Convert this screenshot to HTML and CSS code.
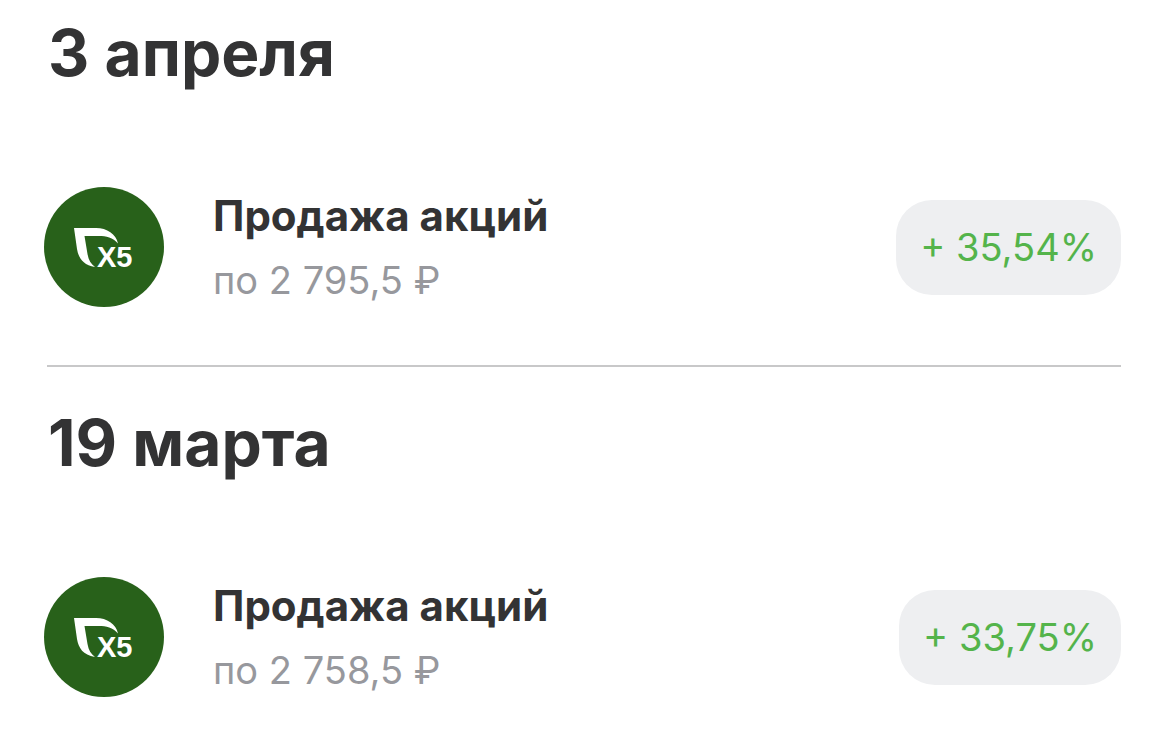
FILE: index.html
```html
<!DOCTYPE html>
<html lang="ru">
<head>
<meta charset="utf-8">
<meta name="viewport" content="width=device-width, initial-scale=1">
<title>Операции</title>
<link rel="stylesheet" href="styles.css">
</head>
<body>
<main class="history">
  <section class="day">
    <h2 class="day-title">3 апреля</h2>
    <article class="deal">
      <svg class="logo" viewBox="0 0 120 120" role="img" aria-label="X5">
        <circle cx="60" cy="60" r="60" fill="#28611a"/>
        <path d="M30 41H52C63 41 72 47 74 56.500C69 50.500 62 49 55 49H40.500L43.500 67C44.500 73 47 77 51 80C39 78 34.500 71 33 62Z" fill="#fff"/>
        <text class="logo-text" x="53" y="80">X5</text>
      </svg>
      <div class="deal-info">
        <h3 class="deal-title">Продажа акций</h3>
        <p class="deal-price">по 2 795,5 ₽</p>
      </div>
      <span class="badge">+ 35,54%</span>
    </article>
  </section>
  <hr class="divider">
  <section class="day">
    <h2 class="day-title">19 марта</h2>
    <article class="deal">
      <svg class="logo" viewBox="0 0 120 120" role="img" aria-label="X5">
        <circle cx="60" cy="60" r="60" fill="#28611a"/>
        <path d="M30 41H52C63 41 72 47 74 56.500C69 50.500 62 49 55 49H40.500L43.500 67C44.500 73 47 77 51 80C39 78 34.500 71 33 62Z" fill="#fff"/>
        <text class="logo-text" x="53" y="80">X5</text>
      </svg>
      <div class="deal-info">
        <h3 class="deal-title">Продажа акций</h3>
        <p class="deal-price">по 2 758,5 ₽</p>
      </div>
      <span class="badge">+ 33,75%</span>
    </article>
  </section>
</main>
</body>
</html>
```
FILE: styles.css
```css
* { box-sizing: border-box; margin: 0; }
body {
  background: #fff;
  color: #333334;
  font-family: Inter, "Liberation Sans", sans-serif;
}
.history { padding: 13px 48px 0 44px; }
.divider {
  height: 2px;
  margin: 53px 0 36px 3px;
  border: 0;
  background: #c8c8c9;
}
.day-title {
  padding-left: 4px;
  font-size: 64px;
  line-height: 80px;
  font-weight: 700;
}
.deal {
  display: flex;
  align-items: center;
  margin-top: 89px;
}
.logo { flex: none; width: 120px; height: 120px; }
.logo-text {
  font-family: "Liberation Sans", sans-serif;
  font-size: 29px;
  font-weight: 700;
  fill: #fff;
}
.deal-info { flex: 1; margin-left: 49px; padding-top: 2px; }
.deal-title { font-size: 42px; line-height: 64px; font-weight: 700; }
.deal-price { font-size: 38px; line-height: 64px; color: #97989d; }
.badge {
  padding: 0 24px;
  border-radius: 36px;
  background: #eeeff1;
  color: #54b44b;
  font-size: 38px;
  line-height: 95px;
  white-space: nowrap;
}
```
